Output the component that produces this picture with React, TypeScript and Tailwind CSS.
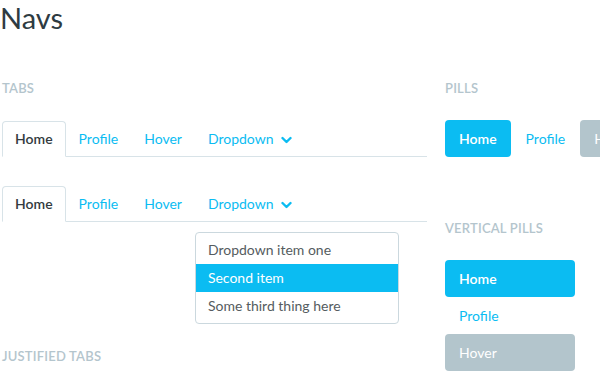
import React from "react";

const Chevron = () => (
  <svg width="11" height="8" viewBox="0 0 11 8" className="ml-[8px] mt-[2px]">
    <polyline points="1.5,2 5.5,6 9.5,2" fill="none" stroke="#0bbcf2" strokeWidth="2.4" strokeLinecap="round" strokeLinejoin="round" />
  </svg>
);

const Label = ({ children, className = "" }: { children: React.ReactNode; className?: string }) => (
  <div className={"text-[13px] font-semibold uppercase leading-4 tracking-[0.2px] text-[#b4c5cd] " + className}>{children}</div>
);

const Tabs = ({ withMenu = false }: { withMenu?: boolean }) => (
  <div className="relative">
    <ul className="flex border-b border-[#d8e3e8] text-[14px] leading-5">
      <li className="-mb-px rounded-t-[4px] border border-[#d8e3e8] border-b-white bg-white px-[12px] py-[7px] font-semibold text-[#333b40]">Home</li>
      <li className="-mb-px border border-transparent px-[12px] py-[7px] text-[#0bbcf2]">Profile</li>
      <li className="-mb-px border border-transparent px-[12px] py-[7px] text-[#0bbcf2]">Hover</li>
      <li className="relative -mb-px flex items-center border border-transparent px-[12px] py-[7px] text-[#0bbcf2]">
        Dropdown
        <Chevron />
        {withMenu && (
          <div className="absolute left-[-1px] top-[45px] z-10 w-[204px] rounded-[4px] border border-[#cbd8de] bg-white py-[3px] text-[14px]">
            <div className="flex h-[28px] items-center px-3 text-[#555c60]">Dropdown item one</div>
            <div className="flex h-[28px] items-center bg-[#0bbcf2] px-3 text-white">Second item</div>
            <div className="flex h-[28px] items-center px-3 text-[#555c60]">Some third thing here</div>
          </div>
        )}
      </li>
    </ul>
  </div>
);

export default function App() {
  return (
    <div className="h-[371px] w-[600px] overflow-hidden bg-white" style={{ fontFamily: "Lato, 'Noto Sans', sans-serif" }}>
      <div className="flex">
        <div className="w-[427px] shrink-0">
          <h1 className="pl-0 text-[29px] font-normal leading-[35px] text-[#2e3b42]">Navs</h1>
          <div className="pl-[2px]">
            <Label className="mt-[45px]">Tabs</Label>
            <div className="mt-[25px]">
              <Tabs />
            </div>
            <div className="mt-[29px]">
              <Tabs withMenu />
            </div>
            <Label className="mt-[126px]">Justified Tabs</Label>
          </div>
        </div>
        <div className="ml-[18px] flex-1 pt-[80px]">
          <Label>Pills</Label>
          <ul className="mt-[24px] flex text-[14px] leading-5">
            <li className="flex h-[37px] items-center rounded-[4px] bg-[#0bbcf2] px-[14px] font-semibold text-white">Home</li>
            <li className="flex h-[37px] items-center px-[15px] text-[#0bbcf2]">Profile</li>
            <li className="flex h-[37px] items-center rounded-[4px] bg-[#b3c5cc] px-[14px] text-white">Hover</li>
          </ul>
          <Label className="mt-[63px]">Vertical Pills</Label>
          <ul className="mt-[24px] flex w-[130px] flex-col text-[14px] leading-5">
            <li className="flex h-[37px] items-center rounded-[4px] bg-[#0bbcf2] px-[14px] font-semibold text-white">Home</li>
            <li className="flex h-[37px] items-center px-[14px] text-[#0bbcf2]">Profile</li>
            <li className="flex h-[37px] items-center rounded-[4px] bg-[#b3c5cc] px-[14px] text-white">Hover</li>
          </ul>
        </div>
      </div>
    </div>
  );
}
